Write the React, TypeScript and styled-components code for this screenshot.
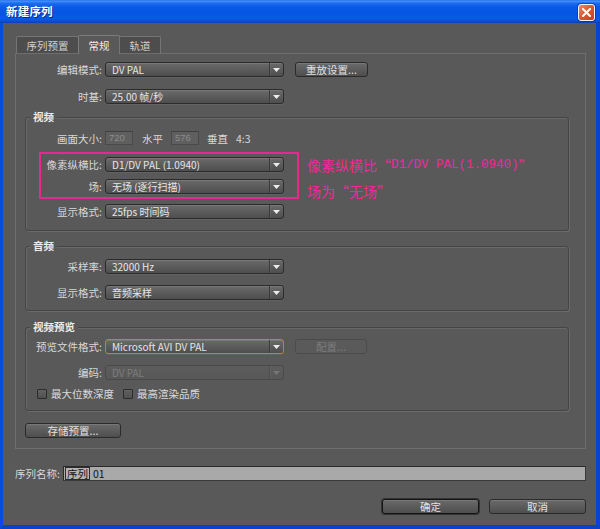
import React from "react";
import styled, { createGlobalStyle } from "styled-components";

const GlobalStyle = createGlobalStyle`
  html, body { margin: 0; padding: 0; background: #595959; }
  body { font-family: "Noto Sans CJK SC", "Liberation Sans", sans-serif; }
  * { box-sizing: border-box; }
`;

const Window = styled.div`
  width: 600px;
  height: 529px;
  display: flex;
  flex-direction: column;
  overflow: hidden;
  font-family: "Noto Sans CJK SC", "Liberation Sans", sans-serif;
`;

const TitleBar = styled.div`
  height: 23px;
  flex: none;
  display: flex;
  align-items: flex-start;
  padding: 0 5px 0 6px;
  background: linear-gradient(
    to bottom,
    #2a74ee 0%,
    #3f8df7 6%,
    #1d6cf0 14%,
    #0a5ae8 30%,
    #0656e4 60%,
    #085ae9 80%,
    #0a4fd6 92%,
    #0b3fb8 100%
  );
`;

const Title = styled.div`
  margin-top: 4px;
  color: #ffffff;
  font-size: 11.5px;
  font-weight: 700;
  line-height: 15px;
  text-shadow: 1px 1px 0 #0a2a8c;
  letter-spacing: 0.2px;
`;

const CloseButton = styled.div`
  margin-left: auto;
  margin-top: 4px;
  width: 17px;
  height: 17px;
  border: 1px solid #f4f4f4;
  border-radius: 3px;
  background: linear-gradient(135deg, #ee8a6a 0%, #de5a33 45%, #c4401c 100%);
  display: flex;
  align-items: center;
  justify-content: center;
  box-shadow: 0 0 0 1px rgba(0, 40, 140, 0.5);
`;

const Frame = styled.div`
  flex: 1;
  display: flex;
  flex-direction: column;
  background: #595959;
  border-left: 3px solid #0b4ade;
  border-right: 4px solid #0a43d4;
  border-bottom: 4px solid #0a40cc;
  padding: 12px 10px 0 12px;
`;

const TabBar = styled.div`
  display: flex;
  align-items: flex-end;
  height: 19px;
  padding-left: 1px;
  margin-bottom: -1px;
  position: relative;
  z-index: 1;
`;

const Tab = styled.div<{ $w: number; $active?: boolean }>`
  width: ${(p) => p.$w}px;
  height: ${(p) => (p.$active ? 19 : 17)}px;
  margin-bottom: ${(p) => (p.$active ? 0 : 1)}px;
  margin-left: -1px;
  border: 1px solid ${(p) => (p.$active ? "#7c7c7c" : "#747474")};
  border-bottom: none;
  border-radius: 2px 2px 0 0;
  background: ${(p) => (p.$active ? "#595959" : "#4d4d4d")};
  color: ${(p) => (p.$active ? "#ececec" : "#cfcfcf")};
  font-size: 10.5px;
  line-height: 15px;
  display: flex;
  align-items: center;
  justify-content: center;
  &:first-child {
    margin-left: 0;
  }
`;

const Panel = styled.div`
  border: 1px solid #6e6e6e;
  display: flex;
  flex-direction: column;
  padding: 8px 0 10px 0;
`;

const Row = styled.div<{ $mt?: number; $h?: number }>`
  display: flex;
  align-items: center;
  height: ${(p) => p.$h ?? 15}px;
  margin-top: ${(p) => p.$mt ?? 0}px;
`;

const Label = styled.div<{ $w: number }>`
  width: ${(p) => p.$w}px;
  flex: none;
  text-align: right;
  color: #d8d8d8;
  font-size: 10.5px;
  line-height: 15px;
  white-space: nowrap;
  margin-right: 3px;
`;

const SelectBox = styled.div<{ $disabled?: boolean; $focused?: boolean }>`
  width: 179px;
  height: 15px;
  flex: none;
  display: flex;
  align-items: stretch;
  border: 1px solid
    ${(p) => (p.$focused ? "#b48a22" : p.$disabled ? "#4a4a4a" : "#2b2b2b")};
  border-radius: 3px;
  background: ${(p) =>
    p.$disabled
      ? "linear-gradient(#5d5d5d, #575757)"
      : "linear-gradient(#6a6a6a 0%, #5c5c5c 50%, #4e4e4e 100%)"};
  box-shadow: ${(p) =>
    p.$disabled ? "none" : "inset 0 1px 0 rgba(255,255,255,0.1), 0 1px 0 rgba(255,255,255,0.06)"};
  color: ${(p) => (p.$disabled ? "#7e7e7e" : "#e6e6e6")};
  overflow: hidden;
`;

const SelectValue = styled.div`
  flex: 1;
  padding-left: 6px;
  font-size: 10px;
  line-height: 13px;
  white-space: nowrap;
`;

const ArrowCell = styled.div<{ $disabled?: boolean }>`
  width: 14px;
  flex: none;
  border-left: 1px solid ${(p) => (p.$disabled ? "#4e4e4e" : "#3a3a3a")};
  box-shadow: inset 1px 0 0 rgba(255, 255, 255, 0.06);
  display: flex;
  align-items: center;
  justify-content: center;
  color: ${(p) => (p.$disabled ? "#767676" : "#ececec")};
`;

const Button = styled.div<{ $w: number; $disabled?: boolean; $default?: boolean; $ml?: number }>`
  width: ${(p) => p.$w}px;
  height: 15px;
  flex: none;
  margin-left: ${(p) => p.$ml ?? 0}px;
  border: 1px solid
    ${(p) => (p.$disabled ? "#4b4b4b" : p.$default ? "#141414" : "#2b2b2b")};
  border-radius: 3px;
  background: ${(p) =>
    p.$disabled ? "#5a5a5a" : "linear-gradient(#6a6a6a 0%, #5c5c5c 50%, #4e4e4e 100%)"};
  box-shadow: ${(p) =>
    p.$disabled
      ? "none"
      : p.$default
      ? "0 0 0 1px #333, inset 0 1px 0 rgba(255,255,255,0.1)"
      : "inset 0 1px 0 rgba(255,255,255,0.1)"};
  color: ${(p) => (p.$disabled ? "#7c7c7c" : "#e2e2e2")};
  font-size: 10.5px;
  line-height: 13px;
  display: flex;
  align-items: center;
  justify-content: center;
  white-space: nowrap;
`;

const Group = styled.div<{ $mt: number; $pt: number; $pb: number }>`
  position: relative;
  margin: ${(p) => p.$mt}px 16px 0 9px;
  padding: ${(p) => p.$pt}px 0 ${(p) => p.$pb}px 0;
  border: 1px solid #454545;
  border-radius: 3px;
  box-shadow: 1px 1px 0 #6a6a6a, inset 1px 1px 0 #696969;
  display: flex;
  flex-direction: column;
`;

const GroupTitle = styled.div`
  position: absolute;
  top: -8px;
  left: 4px;
  padding: 0 3px;
  background: #595959;
  color: #ececec;
  font-size: 10.5px;
  font-weight: 700;
  line-height: 14px;
`;

const NumBox = styled.div<{ $ml?: number }>`
  width: 28px;
  height: 14px;
  flex: none;
  margin-left: ${(p) => p.$ml ?? 0}px;
  background: #5f5f5f;
  border: 1px solid #4a4a4a;
  border-top-color: #404040;
  color: #8c8c8c;
  font-family: "Liberation Sans", sans-serif;
  font-size: 9.5px;
  line-height: 12px;
  padding-left: 3px;
`;

const Unit = styled.div<{ $ml: number }>`
  margin-left: ${(p) => p.$ml}px;
  color: #d8d8d8;
  font-size: 10.5px;
  line-height: 15px;
  white-space: nowrap;
`;

const CheckRow = styled.div`
  display: flex;
  align-items: center;
  height: 12px;
  margin-top: 8px;
  padding-left: 11px;
`;

const CheckBox = styled.div<{ $ml?: number }>`
  width: 10px;
  height: 10px;
  flex: none;
  margin-left: ${(p) => p.$ml ?? 0}px;
  border: 1px solid #2c2c2c;
  border-radius: 1px;
  background: linear-gradient(#626262, #4f4f4f);
`;

const CheckLabel = styled.div`
  margin-left: 4px;
  color: #dadada;
  font-size: 10.5px;
  line-height: 12px;
  white-space: nowrap;
`;

const Highlight = styled.div`
  position: absolute;
  left: 13px;
  top: 34px;
  width: 260px;
  height: 47px;
  border: 2px solid #e8278f;
  pointer-events: none;
`;

const Annotation = styled.div`
  position: absolute;
  left: 281px;
  top: 34px;
  color: #f0299a;
  font-family: "Noto Sans CJK SC", sans-serif;
  font-size: 14px;
  white-space: nowrap;
  display: flex;
  flex-direction: column;
`;

const AnnotationLine = styled.div`
  height: 26px;
  line-height: 26px;
  display: flex;
  align-items: center;
`;

const Mono = styled.span`
  font-family: "Liberation Mono", monospace;
  font-size: 12.5px;
  line-height: 1;
`;

const NameRow = styled.div`
  display: flex;
  align-items: center;
  height: 15px;
  margin-top: 17px;
`;

const NameLabel = styled.div`
  color: #d8d8d8;
  font-size: 10.5px;
  line-height: 15px;
  white-space: nowrap;
  margin-right: 3px;
`;

const NameInput = styled.div`
  flex: 1;
  height: 15px;
  background: #a9a9a9;
  border: 1px solid #2a2a2a;
  border-right-color: #3a3a3a;
  border-bottom-color: #3a3a3a;
  display: flex;
  align-items: center;
  padding-left: 1px;
  color: #141414;
  font-size: 10.5px;
  line-height: 13px;
`;

const Selected = styled.span`
  border: 1px solid #2c2c2c;
  background: #b4b4b4;
  padding: 0 1px;
  line-height: 11px;
  margin-right: 3px;
`;

const ButtonsRow = styled.div`
  display: flex;
  justify-content: flex-end;
  gap: 10px;
  margin-top: 18px;
`;

function Arrow() {
  return (
    <svg width="7" height="4" viewBox="0 0 7 4">
      <path d="M0 0H7L3.5 4Z" fill="currentColor" />
    </svg>
  );
}

function Dropdown({
  value,
  disabled,
  focused,
}: {
  value: string;
  disabled?: boolean;
  focused?: boolean;
}) {
  return (
    <SelectBox $disabled={disabled} $focused={focused}>
      <SelectValue>{value}</SelectValue>
      <ArrowCell $disabled={disabled}>
        <Arrow />
      </ArrowCell>
    </SelectBox>
  );
}

export default function App() {
  return (
    <>
      <GlobalStyle />
      <Window>
        <TitleBar>
          <Title>新建序列</Title>
          <CloseButton>
            <svg width="9" height="9" viewBox="0 0 9 9">
              <path d="M1 1L8 8M8 1L1 8" stroke="#ffffff" strokeWidth="2" strokeLinecap="square" />
            </svg>
          </CloseButton>
        </TitleBar>
        <Frame>
          <TabBar>
            <Tab $w={63}>序列预置</Tab>
            <Tab $w={42} $active>
              常规
            </Tab>
            <Tab $w={42}>轨道</Tab>
          </TabBar>
          <Panel>
            <Row>
              <Label $w={86}>编辑模式:</Label>
              <Dropdown value="DV PAL" />
              <Button $w={73} $ml={11}>
                重放设置...
              </Button>
            </Row>
            <Row $mt={12}>
              <Label $w={86}>时基:</Label>
              <Dropdown value="25.00 帧/秒" />
            </Row>

            <Group $mt={13} $pt={13} $pb={11}>
              <GroupTitle>视频</GroupTitle>
              <Row $h={14}>
                <Label $w={76}>画面大小:</Label>
                <NumBox>720</NumBox>
                <Unit $ml={9}>水平</Unit>
                <NumBox $ml={8}>576</NumBox>
                <Unit $ml={8}>垂直</Unit>
                <Unit $ml={8}>4:3</Unit>
              </Row>
              <Row $mt={12}>
                <Label $w={76}>像素纵横比:</Label>
                <Dropdown value="D1/DV PAL (1.0940)" />
              </Row>
              <Row $mt={7}>
                <Label $w={76}>场:</Label>
                <Dropdown value="无场 (逐行扫描)" />
              </Row>
              <Row $mt={10}>
                <Label $w={76}>显示格式:</Label>
                <Dropdown value="25fps 时间码" />
              </Row>
              <Highlight />
              <Annotation>
                <AnnotationLine>
                  像素纵横比“<Mono>D1/DV PAL(1.0940)</Mono>”
                </AnnotationLine>
                <AnnotationLine>场为“无场”</AnnotationLine>
              </Annotation>
            </Group>

            <Group $mt={15} $pt={12} $pb={10}>
              <GroupTitle>音频</GroupTitle>
              <Row>
                <Label $w={76}>采样率:</Label>
                <Dropdown value="32000 Hz" />
              </Row>
              <Row $mt={11}>
                <Label $w={76}>显示格式:</Label>
                <Dropdown value="音频采样" />
              </Row>
            </Group>

            <Group $mt={16} $pt={11} $pb={10}>
              <GroupTitle>视频预览</GroupTitle>
              <Row>
                <Label $w={76}>预览文件格式:</Label>
                <Dropdown value="Microsoft AVI DV PAL" focused />
                <Button $w={72} $ml={11} $disabled>
                  配置...
                </Button>
              </Row>
              <Row $mt={11}>
                <Label $w={76}>编码:</Label>
                <Dropdown value="DV PAL" disabled />
              </Row>
              <CheckRow>
                <CheckBox />
                <CheckLabel>最大位数深度</CheckLabel>
                <CheckBox $ml={9} />
                <CheckLabel>最高渲染品质</CheckLabel>
              </CheckRow>
            </Group>

            <Row $mt={12}>
              <Button $w={96} $ml={9}>
                存储预置...
              </Button>
            </Row>
          </Panel>

          <NameRow>
            <NameLabel>序列名称:</NameLabel>
            <NameInput>
              <Selected>序列</Selected>01
            </NameInput>
          </NameRow>

          <ButtonsRow>
            <Button $w={97} $default>
              确定
            </Button>
            <Button $w={97}>取消</Button>
          </ButtonsRow>
        </Frame>
      </Window>
    </>
  );
}
